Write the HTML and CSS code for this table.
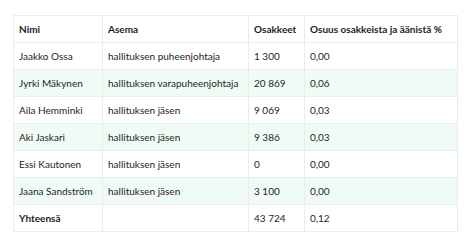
FILE: index.html
```html
<!DOCTYPE html>
<html lang="fi">
<head>
<meta charset="utf-8">
<link rel="stylesheet" href="styles.css">
</head>
<body>
<div class="wrap">
<table class="owners">
  <thead>
    <tr><th class="c1">Nimi</th><th class="c2">Asema</th><th class="c3">Osakkeet</th><th class="c4">Osuus osakkeista ja äänistä %</th></tr>
  </thead>
  <tbody>
    <tr><td>Jaakko Ossa</td><td>hallituksen puheenjohtaja</td><td>1 300</td><td>0,00</td></tr>
    <tr class="alt"><td>Jyrki Mäkynen</td><td>hallituksen varapuheenjohtaja</td><td>20 869</td><td>0,06</td></tr>
    <tr><td>Aila Hemminki</td><td>hallituksen jäsen</td><td>9 069</td><td>0,03</td></tr>
    <tr class="alt"><td>Aki Jaskari</td><td>hallituksen jäsen</td><td>9 386</td><td>0,03</td></tr>
    <tr><td>Essi Kautonen</td><td>hallituksen jäsen</td><td>0</td><td>0,00</td></tr>
    <tr class="alt"><td>Jaana Sandström</td><td>hallituksen jäsen</td><td>3 100</td><td>0,00</td></tr>
    <tr><th>Yhteensä</th><td></td><td>43 724</td><td>0,12</td></tr>
  </tbody>
</table>
</div>
</body>
</html>
```
FILE: styles.css
```css
html, body {
  margin: 0;
  padding: 0;
  background: #ffffff;
}
.wrap {
  padding: 15px 0 0 13px;
}
.owners {
  border-collapse: collapse;
  table-layout: fixed;
  width: 444px;
  font-family: Lato, "Noto Sans", sans-serif;
  font-size: 10px;
  color: #1e1e1e;
}
.owners th, .owners td {
  border: 1px solid #e9edeb;
  height: 27px;
  padding: 0 5px;
  text-align: left;
  vertical-align: middle;
  white-space: nowrap;
  box-sizing: border-box;
}
.owners th.c1 { width: 89px; }
.owners th.c2 { width: 146px; }
.owners th.c3 { width: 56px; }
.owners th.c4 { width: 153px; }
.owners th {
  font-weight: 700;
}
.owners tr.alt td {
  background: #f1fbf6;
}
```
